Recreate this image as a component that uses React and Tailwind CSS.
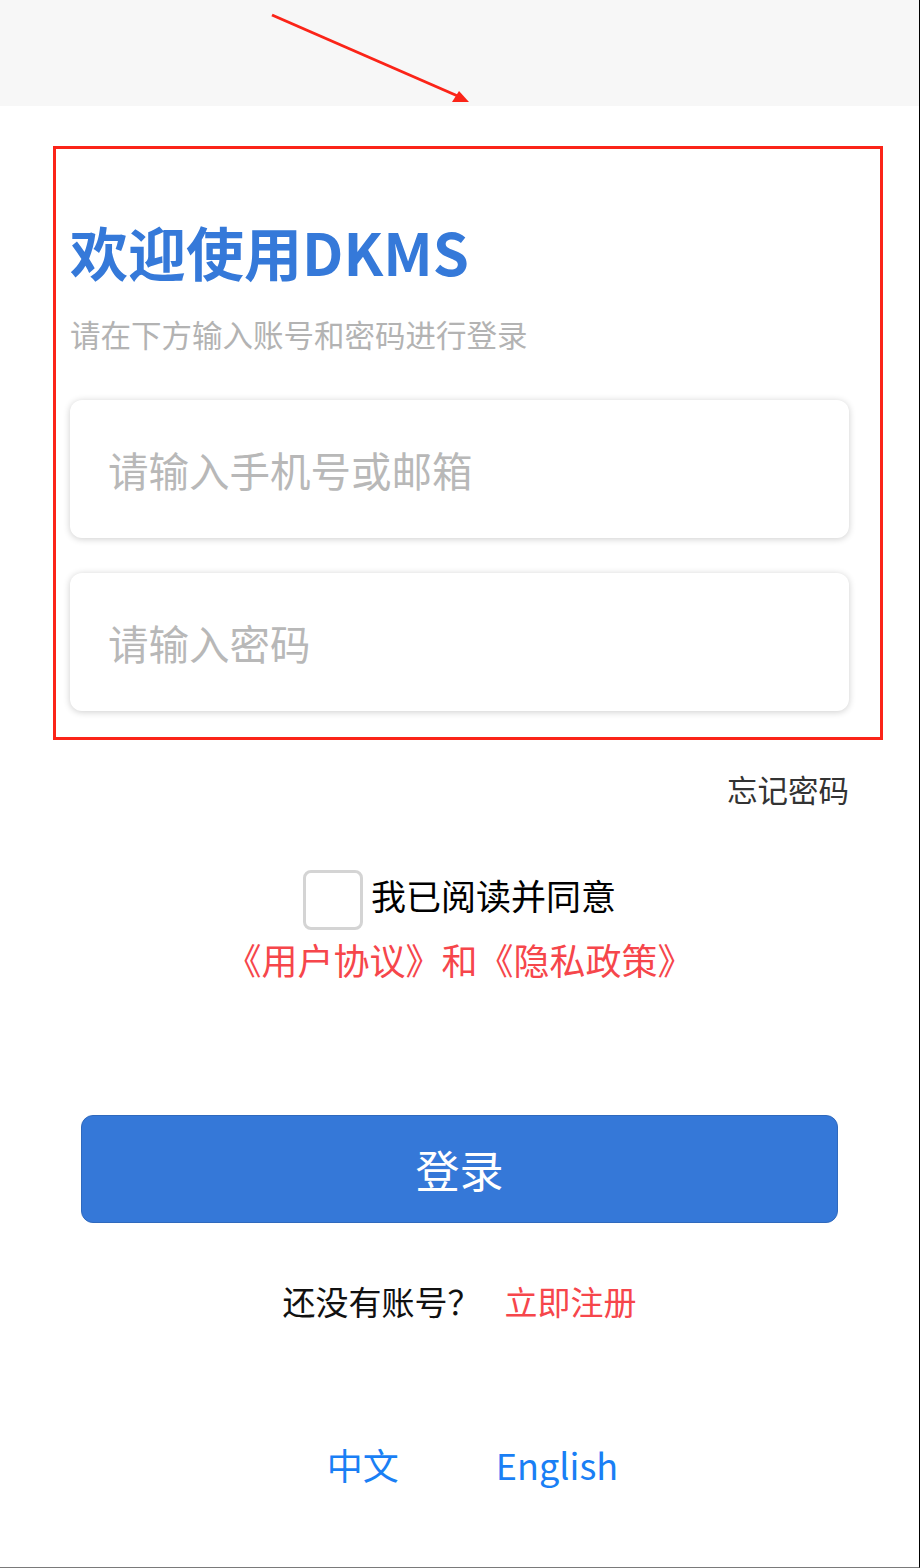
import React from "react";

const font = { fontFamily: '"Noto Sans CJK SC", "Noto Sans", sans-serif' };

export default function App() {
  return (
    <div
      className="relative w-[920px] h-[1568px] bg-white border-r border-black border-b border-b-[#7a7a7a] overflow-hidden"
      style={font}
    >
      <div className="h-[106px] w-full bg-[#f7f7f7]" />

      <div className="px-[70px] pt-[113px]">
        <h1 className="text-[58px] leading-[64px] font-bold text-[#3579d9]">欢迎使用DKMS</h1>
        <p className="mt-[31px] text-[30.5px] leading-[40px] text-[#b3b3b3]">请在下方输入账号和密码进行登录</p>

        <div className="mt-[46px] flex flex-col gap-[35px]">
          <input
            className="h-[138px] w-full rounded-[12px] bg-white pl-[38px] text-[40.5px] text-[#333] placeholder:text-[#b8b8b8] outline-none shadow-[0_1px_7px_rgba(0,0,0,0.2)]"
            placeholder="请输入手机号或邮箱"
          />
          <input
            type="text"
            className="h-[138px] w-full rounded-[12px] bg-white pl-[38px] text-[40.5px] text-[#333] placeholder:text-[#b8b8b8] outline-none shadow-[0_1px_7px_rgba(0,0,0,0.2)]"
            placeholder="请输入密码"
          />
        </div>

        <div className="mt-[58px] flex justify-end">
          <span className="text-[30.5px] leading-[40px] text-[#333]">忘记密码</span>
        </div>

        <div className="mt-[61px] flex items-center justify-center">
          <div className="w-[60px] h-[60px] rounded-[8px] border-[3px] border-[#d4d4d4] bg-white" />
          <span className="ml-[8px] pb-[10px] text-[35px] leading-[44px] text-black">我已阅读并同意</span>
        </div>
        <div className="mt-[7px] text-center text-[36px] leading-[44px] text-[#f6464b]">
          《用户协议》和《隐私政策》
        </div>
      </div>

      <div className="px-[81px] mt-[134px]">
        <button className="w-full h-[108px] rounded-[12px] bg-[#3578d8] border border-[#2f69bd] text-white text-[44px]">
          登录
        </button>
      </div>

      <div className="mt-[56px] flex justify-center items-center text-[33px] leading-[44px]">
        <span className="text-[#111]">还没有账号？</span>
        <span className="ml-[24px] text-[#f6464b]">立即注册</span>
      </div>

      <div className="mt-[116px] pl-[26px] flex justify-center items-center gap-[97px] text-[36px] leading-[50px] text-[#1a7ff5]">
        <span>中文</span>
        <span>English</span>
      </div>

      {/* annotation overlays */}
      <div className="absolute left-[53px] top-[146px] w-[830px] h-[594px] border-[3px] border-[#fb2418] pointer-events-none" />
      <svg className="absolute left-0 top-0 pointer-events-none" width="920" height="120">
        <line x1="272" y1="15" x2="460" y2="97" stroke="#fb2418" strokeWidth="3" />
        <polygon points="469,102 452,102 459,91" fill="#fb2418" />
      </svg>
    </div>
  );
}
